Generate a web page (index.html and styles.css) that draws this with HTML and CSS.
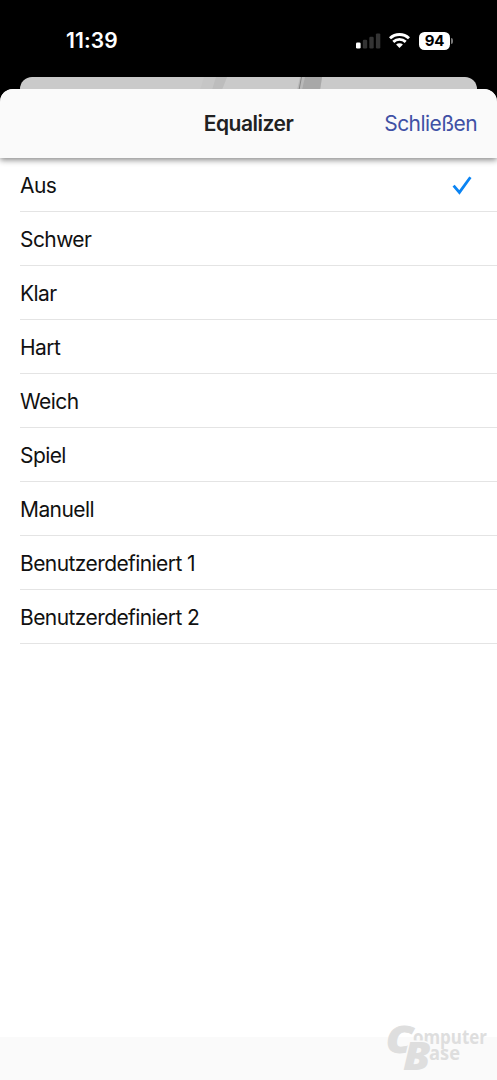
FILE: index.html
```html
<!DOCTYPE html>
<html lang="de">
<head>
<meta charset="utf-8">
<title>Equalizer</title>
<link rel="stylesheet" href="styles.css">
</head>
<body>
<div class="screen">
  <header class="status">
    <span class="clock">11:39</span>
    <div class="indicators">
      <svg class="signal" width="25" height="16" viewBox="0 0 25 16">
        <rect x="0" y="9.5" width="4.6" height="6" rx="1.3" fill="#fff"/>
        <rect x="6.8" y="6.8" width="4.4" height="8.7" rx="1.2" fill="#343434"/>
        <rect x="13.3" y="3.8" width="4.4" height="11.7" rx="1.2" fill="#343434"/>
        <rect x="19.9" y="0.4" width="4.4" height="15.1" rx="1.2" fill="#343434"/>
      </svg>
      <svg class="wifi" width="21" height="16" viewBox="0 0 21 16">
        <g fill="none" stroke="#fff" stroke-width="2.9">
          <path d="M1 5.2C6.4 .2 14.6 .2 20 5.2"/>
          <path d="M4.3 8.8C7.9 5.6 13.1 5.6 16.7 8.8"/>
        </g>
        <path d="M7.1 11.6C9 9.9 12 9.9 13.9 11.6L10.5 15.1Z" fill="#fff"/>
      </svg>
      <div class="battery"><span class="level">94</span><i class="cap"></i></div>
    </div>
  </header>
  <div class="behind">
    <svg width="457" height="30" viewBox="0 0 457 30">
      <path d="M184 0H207L201 13H180Z" fill="#c6c6c6"/>
      <path d="M196 0H207L202 13H192Z" fill="#bdbdbd"/>
      <path d="M280 0H302L300 13H277Z" fill="#b9b9b9"/>
      <path d="M285 0H302L300 13H282Z" fill="#a8a8a8"/>
      <path d="M281.5 0L279 13" stroke="#888" stroke-width="1"/>
    </svg>
  </div>
  <main class="sheet">
    <div class="navbar">
      <h1 class="title">Equalizer</h1>
      <a class="close">Schließen</a>
    </div>
    <ul class="options">
      <li class="option"><span>Aus</span>
        <svg class="check" width="20" height="20" viewBox="0 0 20 20"><path d="M1.6 9.7L7.4 16.4L18.4 1.2" fill="none" stroke="#0b84f3" stroke-width="2.8"/></svg>
      </li>
      <li class="option">Schwer</li>
      <li class="option">Klar</li>
      <li class="option">Hart</li>
      <li class="option">Weich</li>
      <li class="option">Spiel</li>
      <li class="option">Manuell</li>
      <li class="option">Benutzerdefiniert 1</li>
      <li class="option">Benutzerdefiniert 2</li>
    </ul>
    <footer class="toolbar"></footer>
  </main>
  <svg class="watermark" width="112" height="68" viewBox="0 0 112 68">
    <text class="small" x="30" y="32" textLength="74" lengthAdjust="spacingAndGlyphs">omputer</text>
    <text class="small" x="46" y="48" textLength="31" lengthAdjust="spacingAndGlyphs">ase</text>
    <text class="big" x="3" y="40.5" textLength="27" lengthAdjust="spacingAndGlyphs">C</text>
    <text class="big letter-b" x="20" y="58" textLength="27.5" lengthAdjust="spacingAndGlyphs">B</text>
  </svg>
</div>
</body>
</html>
```
FILE: styles.css
```css
* { box-sizing: border-box; }
body { margin: 0; background: #000; font-family: Inter, "Liberation Sans", sans-serif; }
.screen { position: relative; width: 497px; height: 1080px; overflow: hidden; background: #000; display: flex; flex-direction: column; }
.status { height: 77px; flex: none; display: flex; justify-content: space-between; align-items: flex-start; padding: 27px 44px 0 66px; color: #fff; }
.clock { font-size: 21px; line-height: 28px; font-weight: 600; letter-spacing: 0.1px; }
.indicators { display: flex; align-items: center; height: 27px; }
.signal { margin-right: 8px; }
.wifi { margin-right: 9px; }
.battery { display: flex; align-items: center; gap: 1px; }
.level { width: 31px; height: 18px; border-radius: 5.5px; background: #fff; color: #000; font-size: 15px; line-height: 18px; font-weight: 700; text-align: center; letter-spacing: -0.3px; }
.cap { width: 2px; height: 6px; border-radius: 0 2px 2px 0; background: #777; }
.behind { height: 30px; flex: none; margin: 0 20px -18px; border-radius: 12px 12px 0 0; background: #cacaca; overflow: hidden; }
.behind svg { display: block; }
.sheet { position: relative; flex: 1; display: flex; flex-direction: column; background: #fff; border-radius: 13px 13px 0 0; overflow: hidden; }
.navbar { position: relative; z-index: 1; height: 69px; flex: none; display: grid; grid-template-columns: 1fr auto 1fr; align-items: center; padding: 1px 20px 0; background: #fafafa; box-shadow: 0 2px 6px rgba(0,0,0,.48); }
.title { grid-column: 2; margin: 0; font-size: 21px; line-height: 28px; font-weight: 600; letter-spacing: -0.5px; color: #212121; }
.close { justify-self: end; font-size: 21px; line-height: 28px; letter-spacing: -0.58px; color: #3f51a5; }
.options { list-style: none; margin: 0; padding: 0 0 0 20px; flex: 1; }
.option { height: 54px; display: flex; align-items: center; justify-content: space-between; padding: 2px 25px 0 0; border-bottom: 1px solid #e4e4e4; font-size: 21px; line-height: 28px; letter-spacing: -0.58px; color: #111; }
.toolbar { height: 43px; flex: none; background: #fafafa; }
.watermark { position: absolute; left: 383px; top: 1012px; font-family: "Open Sans", "Noto Sans", sans-serif; font-weight: 700; fill: #dedede; }
.small { font-size: 19px; }
.big { font-size: 37.5px; font-weight: 800; font-style: italic; stroke: #dedede; stroke-width: 0.8px; }
.letter-b { font-size: 38.5px; paint-order: stroke; stroke: #fafafa; stroke-width: 3px; }
```
